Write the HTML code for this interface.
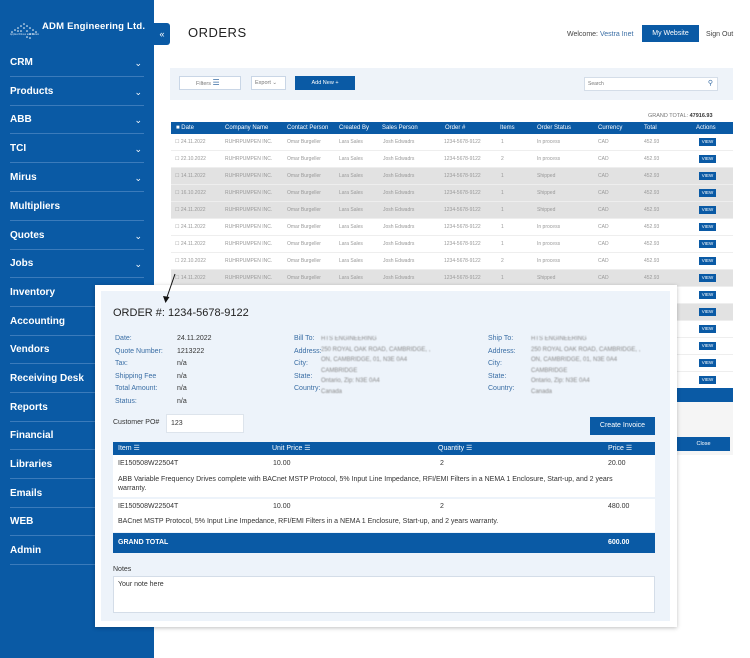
<!DOCTYPE html>
<html><head><meta charset="utf-8">
<style>
*{box-sizing:border-box;margin:0;padding:0}
body{width:750px;height:658px;position:relative;overflow:hidden;background:#fff;font-family:"Liberation Sans",sans-serif;color:#333}
.a{position:absolute}
.sb{left:0;top:0;width:154px;height:658px;background:#0a5aa5}
.mi{position:absolute;left:10px;width:134px;height:28px;color:#fff;font-weight:bold;font-size:10px;line-height:28px;border-bottom:1px solid #3b7bbb}
.mi .c{position:absolute;right:2px;top:0;font-size:9px;font-weight:normal}
.blue{background:#0a5aa5;color:#fff}
.th{font-size:6px;color:#fff;line-height:12px}
.row{position:absolute;left:171px;width:562px;height:17px;font-size:5px;color:#999;line-height:17px;border-bottom:1px solid #eee}
.row span{position:absolute;filter:blur(.35px)}
.vw{position:absolute;left:528px;top:4px;width:17px;height:8px;background:#0a5aa5;color:#fff;font-size:4.5px;line-height:8px;text-align:center;filter:none!important}
.lbl{font-size:7px;color:#3a6ea5}
.val{font-size:7px;color:#333}
.blur{font-size:6px;color:#888;filter:blur(.5px)}
</style></head><body>
<div class="a sb"></div>
<div class="a" style="left:10px;top:19px;width:30px;height:20px">
<svg width="32" height="22"><g fill="#fff"><circle cx="2" cy="13" r=".8"/><circle cx="5" cy="11" r=".8"/><circle cx="8" cy="9" r=".8"/><circle cx="11" cy="7" r=".8"/><circle cx="14" cy="5" r=".8"/><circle cx="17" cy="7" r=".8"/><circle cx="20" cy="9" r=".8"/><circle cx="23" cy="11" r=".8"/><circle cx="26" cy="13" r=".8"/><circle cx="8" cy="12" r=".8"/><circle cx="14" cy="9" r=".8"/><circle cx="17" cy="12" r=".8"/><circle cx="20" cy="15" r=".8"/><circle cx="23" cy="15" r=".8"/><circle cx="17" cy="18" r=".8"/><circle cx="20" cy="19" r=".8"/><circle cx="11" cy="12" r=".8"/></g></svg></div>
<div class="a" style="left:42px;top:21px;color:#fff;font-weight:bold;font-size:9.5px;letter-spacing:.2px">ADM Engineering Ltd.</div>
<div class="a" style="left:10px;top:33px;color:#cfe0f2;font-size:2.5px">Applied Drives and Motion</div>
<div class="a blue" style="left:154px;top:23px;width:16px;height:22px;border-radius:0 3px 3px 0;font-size:9px;text-align:center;line-height:22px">«</div>

<div class="mi" style="top:49px">CRM<span class="c">⌄</span></div>
<div class="mi" style="top:78px">Products<span class="c">⌄</span></div>
<div class="mi" style="top:106px">ABB<span class="c">⌄</span></div>
<div class="mi" style="top:135px">TCI<span class="c">⌄</span></div>
<div class="mi" style="top:164px">Mirus<span class="c">⌄</span></div>
<div class="mi" style="top:193px">Multipliers</div>
<div class="mi" style="top:222px">Quotes<span class="c">⌄</span></div>
<div class="mi" style="top:250px">Jobs<span class="c">⌄</span></div>
<div class="mi" style="top:279px">Inventory</div>
<div class="mi" style="top:308px">Accounting</div>
<div class="mi" style="top:336px">Vendors</div>
<div class="mi" style="top:365px">Receiving Desk</div>
<div class="mi" style="top:394px">Reports</div>
<div class="mi" style="top:422px">Financial</div>
<div class="mi" style="top:451px">Libraries</div>
<div class="mi" style="top:480px">Emails</div>
<div class="mi" style="top:508px">WEB</div>
<div class="mi" style="top:537px">Admin</div>

<div class="a" style="left:188px;top:25px;font-size:13px;color:#222;letter-spacing:.5px">ORDERS</div>
<div class="a" style="left:567px;top:31px;font-size:7px;color:#444">Welcome: <span style="color:#3a6ea5">Vestra Inet</span></div>
<div class="a blue" style="left:642px;top:25px;width:57px;height:17px;font-size:7px;text-align:center;line-height:17px">My Website</div>
<div class="a" style="left:706px;top:31px;font-size:7px;color:#444">Sign Out</div>

<div class="a" style="left:170px;top:68px;width:563px;height:32px;background:#eef3f9"></div>
<div class="a" style="left:179px;top:76px;width:62px;height:14px;background:#fff;border:1px solid #c9d6e6;font-size:5.5px;color:#777;line-height:12px;padding-left:16px">Filters <span style="color:#3a6ea5;font-size:8px">☰</span></div>
<div class="a" style="left:251px;top:76px;width:35px;height:14px;background:#fff;border:1px solid #c9d6e6;font-size:5.5px;color:#777;line-height:12px;padding-left:3px">Export ⌄</div>
<div class="a blue" style="left:295px;top:76px;width:60px;height:14px;font-size:5.5px;text-align:center;line-height:14px">Add New +</div>
<div class="a" style="left:584px;top:77px;width:134px;height:14px;background:#fff;border:1px solid #d4dde8;font-size:5px;color:#777;line-height:12px;padding-left:3px">Search<span style="position:absolute;right:4px;color:#3a6ea5;font-size:7px">⚲</span></div>

<div class="a" style="left:648px;top:113px;font-size:5.5px;color:#777">GRAND TOTAL: <b style="color:#333">47916.93</b></div>
<div class="a blue th" style="left:171px;top:122px;width:562px;height:12px"></div>
<div class="a th" style="left:176px;top:122px">■ Date</div>
<div class="a th" style="left:225px;top:122px">Company Name</div>
<div class="a th" style="left:287px;top:122px">Contact Person</div>
<div class="a th" style="left:339px;top:122px">Created By</div>
<div class="a th" style="left:382px;top:122px">Sales Person</div>
<div class="a th" style="left:445px;top:122px">Order #</div>
<div class="a th" style="left:500px;top:122px">Items</div>
<div class="a th" style="left:537px;top:122px">Order Status</div>
<div class="a th" style="left:598px;top:122px">Currency</div>
<div class="a th" style="left:644px;top:122px">Total</div>
<div class="a th" style="left:696px;top:122px">Actions</div>

<div class="a" style="left:171px;top:134px;width:562px;height:321px;background:#f5f5f5"></div>
<div id="rows"></div>
<script>
var dates=["24.11.2022","22.10.2022","14.11.2022","16.10.2022","24.11.2022","24.11.2022","24.11.2022","22.10.2022","14.11.2022","24.11.2022","24.11.2022","24.11.2022","24.11.2022","24.11.2022","24.11.2022"];
var gray=[2,3,4,8,10];var h="";
for(var i=0;i<15;i++){var g=gray.indexOf(i)>=0;var st=g?"Shipped":"In process";var it=(i==1||i==7)?"2":"1";
h+='<div class="row" style="top:'+(134+i*17)+'px;background:'+(g?'#e2e2e2':'#fff')+'"><span style="left:4px">☐ '+dates[i]+'</span><span style="left:54px">RUHRPUMPEN INC.</span><span style="left:116px">Omar Burgeller</span><span style="left:168px">Lara Sales</span><span style="left:212px">Josh Edwadrs</span><span style="left:273px">1234-5678-9122</span><span style="left:330px">'+it+'</span><span style="left:366px">'+st+'</span><span style="left:427px">CAD</span><span style="left:473px">452.93</span><div class="vw">VIEW</div></div>';}
document.getElementById("rows").innerHTML=h;
</script>
<div class="a blue" style="left:171px;top:388px;width:562px;height:14px"></div>
<div class="a blue" style="left:677px;top:437px;width:53px;height:14px;font-size:5.5px;text-align:center;line-height:14px">Close</div>

<div class="a" style="left:95px;top:285px;width:582px;height:342px;background:#fff;box-shadow:0 1px 4px rgba(0,0,0,.25)"></div>
<div class="a" style="left:101px;top:291px;width:569px;height:330px;background:#edf3fa"></div>
<svg class="a" style="left:160px;top:270px" width="20" height="36"><line x1="15" y1="4" x2="6" y2="30" stroke="#111" stroke-width="1"/><path d="M3 26 L5.5 33 L9.5 27 Z" fill="#111"/></svg>
<div class="a" style="left:113px;top:307px;font-size:11px;color:#222">ORDER #: 1234-5678-9122</div>

<div class="a lbl" style="left:115px;top:333px;line-height:12.6px">Date:<br>Quote Number:<br>Tax:<br>Shipping Fee<br>Total Amount:<br>Status:</div>
<div class="a val" style="left:177px;top:333px;line-height:12.6px">24.11.2022<br>1213222<br>n/a<br>n/a<br>n/a<br>n/a</div>
<div class="a lbl" style="left:294px;top:333px;line-height:12.6px">Bill To:<br>Address:<br>City:<br>State:<br>Country:</div>
<div class="a blur" style="left:321px;top:334px;line-height:10.5px">HTS ENGINEERING<br>250 ROYAL OAK ROAD, CAMBRIDGE, ,<br>ON, CAMBRIDGE, 01, N3E 0A4<br>CAMBRIDGE<br>Ontario, Zip: N3E 0A4<br>Canada</div>
<div class="a lbl" style="left:488px;top:333px;line-height:12.6px">Ship To:<br>Address:<br>City:<br>State:<br>Country:</div>
<div class="a blur" style="left:531px;top:334px;line-height:10.5px">HTS ENGINEERING<br>250 ROYAL OAK ROAD, CAMBRIDGE, ,<br>ON, CAMBRIDGE, 01, N3E 0A4<br>CAMBRIDGE<br>Ontario, Zip: N3E 0A4<br>Canada</div>

<div class="a val" style="left:113px;top:419px">Customer PO#</div>
<div class="a" style="left:166px;top:414px;width:78px;height:19px;background:#fff;border:1px solid #dde4ec;font-size:7px;padding:5px 4px">123</div>
<div class="a blue" style="left:590px;top:417px;width:65px;height:18px;font-size:7px;text-align:center;line-height:18px">Create Invoice</div>

<div class="a blue" style="left:113px;top:442px;width:542px;height:13px"></div>
<div class="a th" style="left:118px;top:443px;font-size:7px">Item ☰</div>
<div class="a th" style="left:272px;top:443px;font-size:7px">Unit Price ☰</div>
<div class="a th" style="left:438px;top:443px;font-size:7px">Quantity ☰</div>
<div class="a th" style="left:608px;top:443px;font-size:7px">Price ☰</div>

<div class="a" style="left:113px;top:455px;width:542px;height:42px;background:#fff"></div>
<div class="a" style="left:113px;top:499px;width:542px;height:33px;background:#fff"></div>
<div class="a val" style="left:118px;top:460px">IE150508W22504T</div>
<div class="a val" style="left:273px;top:460px">10.00</div>
<div class="a val" style="left:440px;top:460px">2</div>
<div class="a val" style="left:608px;top:460px">20.00</div>
<div class="a val" style="left:118px;top:475px;width:500px;line-height:9px">ABB Variable Frequency Drives complete with BACnet MSTP Protocol, 5% Input Line Impedance, RFI/EMI Filters in a NEMA 1 Enclosure, Start-up, and 2 years warranty.</div>
<div class="a val" style="left:118px;top:503px">IE150508W22504T</div>
<div class="a val" style="left:273px;top:503px">10.00</div>
<div class="a val" style="left:440px;top:503px">2</div>
<div class="a val" style="left:608px;top:503px">480.00</div>
<div class="a val" style="left:118px;top:518px">BACnet MSTP Protocol, 5% Input Line Impedance, RFI/EMI Filters in a NEMA 1 Enclosure, Start-up, and 2 years warranty.</div>
<div class="a blue" style="left:113px;top:533px;width:542px;height:20px;font-size:7px;font-weight:bold;line-height:20px;padding-left:5px">GRAND TOTAL<span style="position:absolute;left:495px">600.00</span></div>

<div class="a val" style="left:113px;top:566px">Notes</div>
<div class="a" style="left:113px;top:576px;width:542px;height:37px;background:#fff;border:1px solid #d4dde8;font-size:7px;padding:4px">Your note here</div>
</body></html>
